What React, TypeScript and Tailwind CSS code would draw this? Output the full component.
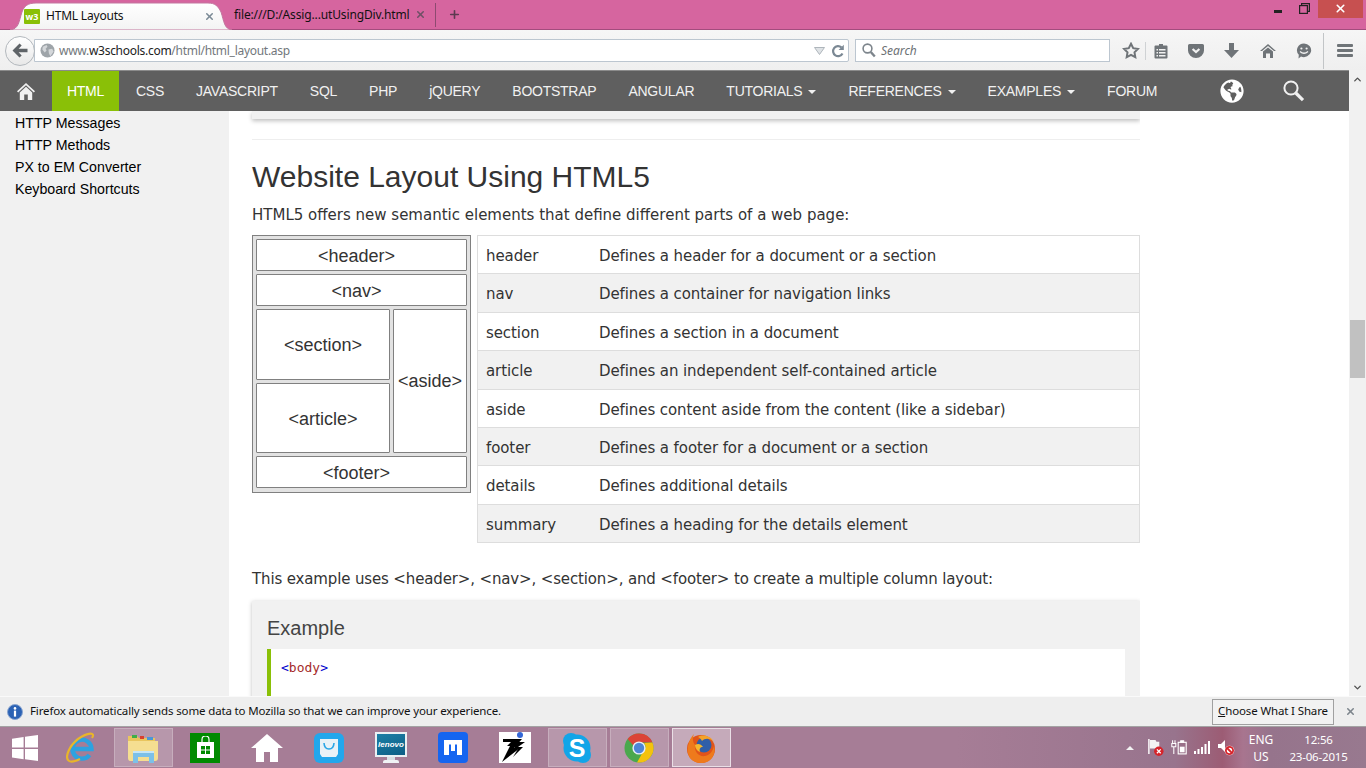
import { ChevronDown, ChevronUp, Plus, X } from 'lucide-react';
import { FaGlobeAmericas } from 'react-icons/fa';

const navLinks = [
  { label: 'CSS' },
  { label: 'JAVASCRIPT' },
  { label: 'SQL' },
  { label: 'PHP' },
  { label: 'jQUERY' },
  { label: 'BOOTSTRAP' },
  { label: 'ANGULAR' },
  { label: 'TUTORIALS', caret: true },
  { label: 'REFERENCES', caret: true },
  { label: 'EXAMPLES', caret: true },
  { label: 'FORUM' },
];

const sideLinks = ['HTTP Messages', 'HTTP Methods', 'PX to EM Converter', 'Keyboard Shortcuts'];

const tags = [
  ['header', 'Defines a header for a document or a section'],
  ['nav', 'Defines a container for navigation links'],
  ['section', 'Defines a section in a document'],
  ['article', 'Defines an independent self-contained article'],
  ['aside', 'Defines content aside from the content (like a sidebar)'],
  ['footer', 'Defines a footer for a document or a section'],
  ['details', 'Defines additional details'],
  ['summary', 'Defines a heading for the details element'],
];

function TabStrip() {
  return (
    <div className="flex h-[30px] items-end border-b border-[#a34c7d] bg-[#d6659f] pl-[10px] font-['Noto_Sans',sans-serif] text-[12px] text-[#111]">
      <div className="relative -mb-px flex h-[28px] w-[222px] items-center">
        <svg className="absolute inset-0" width="222" height="28" viewBox="0 0 222 28">
          <defs>
            <linearGradient id="tabFill" x1="0" y1="0" x2="0" y2="1">
              <stop offset="0" stopColor="#ffffff" />
              <stop offset="1" stopColor="#f3f3f3" />
            </linearGradient>
          </defs>
          <path d="M0 28C9 27 9 19 12 10C14 4 18 1 26 1H198C205 1 208 4 211 10C214 19 214 27 222 28Z" fill="url(#tabFill)" stroke="#c3769f" strokeWidth="1" />
        </svg>
        <div className="relative ml-[14px] flex h-[15px] w-[16px] items-center justify-center rounded-[1px] bg-[#8ac007] text-[9px] font-bold leading-none text-white">w3</div>
        <span className="relative ml-[6px] w-[158px] truncate text-[12px] tracking-[-0.2px]">HTML Layouts</span>
        <X className="relative text-[#7b8a96]" size={11} strokeWidth={3.4} />
      </div>
      <div className="flex h-[29px] w-[203px] items-center pl-[2px]">
        <span className="w-[181px] whitespace-nowrap text-[12px] tracking-[-0.14px]">file:///D:/Assig...utUsingDiv.html</span>
        <X className="text-[#6e5166]" size={11} strokeWidth={3.4} />
      </div>
      <div className="mb-[2px] h-[24px] w-px bg-[#8d4a70]" />
      <div className="flex h-[29px] w-[36px] items-center justify-center text-[#5c3a50]">
        <Plus size={13} strokeWidth={3} />
      </div>
      <div className="flex-1" />
      <div className="mb-[11px] flex h-[19px] items-center">
        <div className="mr-[17px] mt-[5px] h-[3px] w-[8px] bg-[#222]" />
        <svg className="mr-[8px]" width="11" height="11" viewBox="0 0 11 11" fill="none" stroke="#222" strokeWidth="1.2">
          <rect x="0.6" y="2.6" width="7.8" height="7.8" />
          <path d="M2.6 2.4V0.6H10.4V8.4H8.6" />
        </svg>
        <div className="mr-[3px] flex h-[19px] w-[45px] items-center justify-center bg-[#c75050] text-white">
          <X size={13} strokeWidth={3} />
        </div>
      </div>
    </div>
  );
}

function ToolIcon({ children, w = 36 }: { children: React.ReactNode; w?: number }) {
  return (
    <div className="flex items-center justify-center" style={{ width: w }}>
      {children}
    </div>
  );
}

function Toolbar() {
  return (
    <div className="flex h-[40px] items-center bg-gradient-to-b from-[#f6f6f6] to-[#efefef] pl-[5px] pt-px font-['Noto_Sans',sans-serif]">
      <div className="z-10 flex h-[30px] w-[30px] items-center justify-center rounded-full border border-[#b3b8bd] bg-gradient-to-b from-white to-[#e8e8e8]">
        <svg width="16" height="15" viewBox="0 0 16 15" fill="#5f6468">
          <path d="M7.5 0.5L9.7 2.6L6.6 5.7H15.5V9.3H6.6L9.7 12.4L7.5 14.5L0.5 7.5Z" />
        </svg>
      </div>
      <div className="-ml-[1px] flex h-[23px] w-[815px] items-center rounded-r-[2px] border border-[#bcc6d0] bg-white pl-[5px]">
        <svg width="15" height="15" viewBox="0 0 16 16">
          <circle cx="8" cy="8" r="7.5" fill="#9ea4a9" />
          <path d="M3 4L7 2L8 4L6 6L7 8L5 10L2.5 7ZM9 7L13 6L14.5 9L11 14L9.5 11Z" fill="#d4d7da" />
        </svg>
        <span className="ml-[4px] w-[755px] whitespace-nowrap text-[12px] tracking-[-0.28px] text-[#72777c]">
          www.<span className="text-[#222]">w3schools.com</span>/html/html_layout.asp
        </span>
        <svg width="11" height="8" viewBox="0 0 11 8">
          <path d="M0.5 0.5H10.5L5.5 7.5Z" fill="#dfe3e6" stroke="#aeb5bb" />
        </svg>
        <svg className="ml-[6px]" width="14" height="14" viewBox="0 0 14 14" fill="none" stroke="#7b8894" strokeWidth="2.2">
          <path d="M11.5 9.5A5 5 0 1 1 10.4 3.4" />
          <path d="M12.8 0.8V6H7.6Z" fill="#7b8894" stroke="none" />
        </svg>
      </div>
      <div className="ml-[6px] flex h-[23px] w-[255px] items-center border border-[#bcc6d0] bg-white pl-[6px]">
        <svg width="14" height="15" viewBox="0 0 14 15" fill="none" stroke="#7d858c">
          <circle cx="5.5" cy="5.5" r="4.4" strokeWidth="1.6" />
          <path d="M8.8 9L12.8 13.5" strokeWidth="2.4" />
        </svg>
        <span className="ml-[5px] text-[12px] italic text-[#6c7175]">Search</span>
      </div>
      <div className="ml-[10px] flex items-center">
        <ToolIcon w={22}>
          <svg width="18" height="17" viewBox="0 0 18 17" fill="none" stroke="#6f7478" strokeWidth="2">
            <path d="M9 1.8L11.2 6.2L16 6.9L12.5 10.3L13.3 15.1L9 12.8L4.7 15.1L5.5 10.3L2 6.9L6.8 6.2Z" />
          </svg>
        </ToolIcon>
        <div className="ml-[3px] h-[18px] w-px bg-[#cfd2d4]" />
        <ToolIcon w={30}>
          <svg width="14" height="16" viewBox="0 0 14 16">
            <path d="M1.5 2.5H5V1H9V2.5H12.5A1 1 0 0 1 13.5 3.5V14.5A1 1 0 0 1 12.5 15.5H1.5A1 1 0 0 1 .5 14.5V3.5A1 1 0 0 1 1.5 2.5Z" fill="#6f7478" />
            <path d="M2.5 6H4V7.5H2.5ZM5 6H11.5V7.5H5ZM2.5 9H4V10.5H2.5ZM5 9H11.5V10.5H5ZM2.5 12H4V13.5H2.5ZM5 12H11.5V13.5H5Z" fill="#f2f2f2" />
          </svg>
        </ToolIcon>
        <ToolIcon w={37}>
          <svg className="ml-[3px]" width="16" height="14" viewBox="0 0 16 14">
            <path d="M1.5 0H14.5A1.5 1.5 0 0 1 16 1.5V6.5A8 7.5 0 0 1 0 6.5V1.5A1.5 1.5 0 0 1 1.5 0Z" fill="#6f7478" />
            <path d="M4.6 5L8 8L11.4 5" fill="none" stroke="#f2f2f2" strokeWidth="2.2" />
          </svg>
        </ToolIcon>
        <ToolIcon w={37}>
          <svg width="15" height="15" viewBox="0 0 15 15" fill="#6f7478">
            <path d="M5 0H10V7H15L7.5 15L0 7H5Z" />
          </svg>
        </ToolIcon>
        <ToolIcon w={36}>
          <svg width="16" height="14" viewBox="0 0 16 14" fill="#6f7478">
            <path d="M8 0L16 7H14L8 2L2 7H0Z" />
            <path d="M8 3.5L13 7.5V14H10V9.5H6V14H3V7.5Z" />
          </svg>
        </ToolIcon>
        <ToolIcon w={36}>
          <svg width="16" height="16" viewBox="0 0 16 16">
            <path d="M8 0.5A7.2 6.8 0 1 1 5 13.5L2.5 15.5L2.8 11.8A7.2 6.8 0 0 1 8 0.5Z" fill="#6f7478" />
            <circle cx="5.4" cy="5.5" r="1.1" fill="#f2f2f2" />
            <circle cx="10.6" cy="5.5" r="1.1" fill="#f2f2f2" />
            <path d="M4 8.5Q8 12 12 8.5" fill="none" stroke="#f2f2f2" strokeWidth="1.3" />
          </svg>
        </ToolIcon>
        <div className="ml-px h-[36px] w-px bg-[#c2c5c7]" />
        <div className="ml-[13px] flex w-[16px] flex-col gap-[2px]">
          <div className="h-[3px] rounded-[1px] bg-[#6f7478]" />
          <div className="h-[3px] rounded-[1px] bg-[#6f7478]" />
          <div className="h-[3px] rounded-[1px] bg-[#6f7478]" />
        </div>
      </div>
    </div>
  );
}

function TopNav() {
  return (
    <div className="flex h-[41px] items-center border-t border-[#8b8b8b] bg-[#5f5f5f] font-['Liberation_Sans',sans-serif] text-[14px] tracking-[-0.25px] text-[#f1f1f1]">
      <div className="flex w-[52px] items-center justify-center">
        <svg width="18" height="17" viewBox="0 0 18 17" fill="#f1f1f1">
          <path d="M9 0L18 8.2L16.8 9.4L9 2.3L1.2 9.4L0 8.2Z" />
          <path d="M9 3.8L15.2 9.4V17H10.8V11.6H7.2V17H2.8V9.4Z" />
        </svg>
      </div>
      <div className="flex h-full w-[67px] items-center justify-center bg-[#8ac007] text-white">HTML</div>
      <div className="ml-px flex">
        {navLinks.map((link) => (
          <div key={link.label} className="flex items-center whitespace-nowrap px-[16px]">
            {link.label}
            {link.caret && <span className="ml-[6px] mt-[1px] h-0 w-0 border-x-[4px] border-t-[4px] border-x-transparent border-t-[#f1f1f1]" />}
          </div>
        ))}
      </div>
      <div className="ml-[47px] flex items-center">
        <FaGlobeAmericas size={24} className="text-white" />
        <svg className="ml-[39px]" width="22" height="22" viewBox="0 0 22 22" fill="none" stroke="#f1f1f1">
          <circle cx="8" cy="8" r="6.6" strokeWidth="2" />
          <path d="M12.8 13L20 20.2" strokeWidth="3.2" />
        </svg>
      </div>
    </div>
  );
}

function Sidebar() {
  return (
    <div className="w-[229px] shrink-0 bg-[#f1f1f1] pl-[15px] pt-px font-['Liberation_Sans',sans-serif] text-[14.2px] leading-[22px] text-black">
      {sideLinks.map((link) => (
        <div key={link}>{link}</div>
      ))}
    </div>
  );
}

function LayoutBox({ label, className }: { label: string; className: string }) {
  return (
    <div className={`flex items-center justify-center rounded-[1px] border border-[#808080] bg-white ${className}`}>
      {label}
    </div>
  );
}

function LayoutDiagram() {
  return (
    <div className="grid h-[258px] w-[219px] shrink-0 grid-cols-[134px_1fr] grid-rows-[32px_32px_71px_70px_32px] gap-[3px] border border-[#808080] bg-[#e2e2e2] p-[3px] font-['Liberation_Sans',sans-serif] text-[18px] text-[#333]">
      <LayoutBox label="<header>" className="col-span-2 pr-[10px] pt-[3px]" />
      <LayoutBox label="<nav>" className="col-span-2 pr-[10px] pt-[3px]" />
      <LayoutBox label="<section>" className="pt-px" />
      <LayoutBox label="<aside>" className="row-span-2 pt-px" />
      <LayoutBox label="<article>" className="pt-[3px]" />
      <LayoutBox label="<footer>" className="col-span-2 pr-[10px] pt-[3px]" />
    </div>
  );
}

function TagTable() {
  return (
    <div className="ml-[6px] flex w-[663px] flex-col border-x border-t border-[#dddddd] tracking-[-0.09px]">
      {tags.map(([name, desc], i) => (
        <div
          key={name}
          className={`grid h-[38.4px] grid-cols-[113px_1fr] items-center border-b border-[#dddddd] pl-[8px] pt-[3px] ${i % 2 === 1 ? 'bg-[#f1f1f1]' : 'bg-white'}`}
        >
          <span>{name}</span>
          <span>{desc}</span>
        </div>
      ))}
    </div>
  );
}

function PageBody() {
  return (
    <div className="flex min-h-0 flex-1 overflow-hidden bg-white">
      <Sidebar />
      <div className="w-[911px] shrink-0 pl-[23px] font-['DejaVu_Sans',sans-serif] text-[15px] text-[#333]">
        <div className="h-[8px] bg-[#f1f1f1] shadow-[0_2px_4px_rgba(0,0,0,0.25)]" />
        <div className="mt-[20px] h-px bg-[#eeeeee]" />
        <h2 className="mt-[18px] font-['Liberation_Sans',sans-serif] text-[30px] leading-[38px] text-[#333]">Website Layout Using HTML5</h2>
        <p className="mt-[9px] leading-[20px]">HTML5 offers new semantic elements that define different parts of a web page:</p>
        <div className="mt-[10px] flex items-start">
          <LayoutDiagram />
          <TagTable />
        </div>
        <p className="mt-[26px] leading-[20px] tracking-[-0.14px]">
          {'This example uses <header>, <nav>, <section>, and <footer> to create a multiple column layout:'}
        </p>
        <div className="mt-[12px] bg-[#f1f1f1] px-[15px] pt-[12px] pb-[16px] shadow-[0_1px_4px_rgba(0,0,0,0.25)]">
          <h3 className="font-['Liberation_Sans',sans-serif] text-[20px] leading-[30px] text-[#444]">Example</h3>
          <div className="mt-[6px] h-[120px] border-l-4 border-[#8ac007] bg-white pl-[10px] pt-[9px] font-['DejaVu_Sans_Mono',monospace] text-[13px] leading-[20px]">
            <span className="text-[#0000cd]">&lt;</span>
            <span className="text-[#a52a2a]">body</span>
            <span className="text-[#0000cd]">&gt;</span>
          </div>
        </div>
      </div>
      <div className="flex-1 bg-white" />
    </div>
  );
}

function Scrollbar() {
  return (
    <div className="flex w-[17px] shrink-0 flex-col items-center bg-[#f1f1f1] text-[#505050]">
      <ChevronUp className="mt-[4px] shrink-0" size={11} strokeWidth={3} />
      <div className="mt-[235px] h-[58px] w-[15px] shrink-0 bg-[#c1c1c1]" />
      <div className="flex-1" />
      <ChevronDown className="mb-[3px] shrink-0" size={11} strokeWidth={3} />
    </div>
  );
}

function NoticeBar() {
  return (
    <div className="flex h-[31px] items-center border-t border-b border-t-[#fafafa] border-b-[#a3a3a3] bg-[#eeeeee] pl-[7px] font-['Noto_Sans',sans-serif] text-[11.5px] tracking-[-0.14px] text-[#111]">
      <svg width="16" height="16" viewBox="0 0 16 16">
        <circle cx="8" cy="8" r="7.5" fill="#2b62b4" stroke="#8ba6d0" />
        <circle cx="8" cy="4.4" r="1.3" fill="#fff" />
        <rect x="6.9" y="6.6" width="2.2" height="6" fill="#fff" />
      </svg>
      <span className="ml-[7px] pb-[2px]">Firefox automatically sends some data to Mozilla so that we can improve your experience.</span>
      <div className="flex-1" />
      <div className="flex h-[26px] w-[122px] items-center justify-center border border-[#a0a0a0] bg-[#f2f2f2] pb-[2px]">
        <span className="underline">C</span>hoose What I Share
      </div>
      <div className="flex w-[32px] justify-center text-[#7d858c]">
        <X size={11} strokeWidth={3.4} />
      </div>
    </div>
  );
}

function TaskCell({ children, active, strong }: { children: React.ReactNode; active?: boolean; strong?: boolean }) {
  return (
    <div className="flex h-[41px] w-[62px] shrink-0 items-center justify-center">
      <div
        className={`flex h-[39px] w-[59px] items-center justify-center ${
          strong ? 'border border-[#eadfe6] bg-white/35' : active ? 'border border-[#c7aebd] bg-white/20' : ''
        }`}
      >
        {children}
      </div>
    </div>
  );
}

function Taskbar() {
  return (
    <div className="flex h-[41px] items-center overflow-hidden bg-[linear-gradient(90deg,#a67d96_0%,#a67d96_70%,#98748d_86%,#9c5c74_89.5%,#a8758f_91%,#96748c_93%,#98798f_100%)] font-['Noto_Sans',sans-serif] text-white">
      <div className="flex w-[50px] shrink-0 justify-center">
        <svg width="26" height="26" viewBox="0 0 28 26" fill="#fff" preserveAspectRatio="none">
          <path d="M0 3.8L12.5 2V12.5H0ZM14 1.8L28 0V12.5H14ZM0 14H12.5V24.2L0 22.4ZM14 14H28V26L14 24.2Z" />
        </svg>
      </div>
      <TaskCell>
        <svg width="30" height="32" viewBox="0 0 30 32" fill="none">
          <path d="M6.5 17H25.5A9.5 9.5 0 1 0 23.5 23" stroke="#2da2e0" strokeWidth="4.4" />
          <path d="M26 6C30 0 22 0 12 7C4 13 -1 24 2 28C4 31 10 29 14 27" stroke="#e9b52a" strokeWidth="2.2" />
        </svg>
      </TaskCell>
      <TaskCell active>
        <svg width="32" height="32" viewBox="0 0 32 32">
          <path d="M1 4H10L12 6H28V10H1Z" fill="#e9c55e" />
          <rect x="5" y="3" width="5" height="3" fill="#3fae49" />
          <rect x="13" y="4" width="4" height="3" fill="#d9402f" />
          <rect x="20" y="5" width="6" height="3" fill="#4a97d6" />
          <path d="M1 9H31V26C31 28 30 29 28 29H3C2 29 1 28 1 26Z" fill="#f5de91" />
          <path d="M6 19H27V31H22V25H11V31H6Z" fill="#7cc0e8" />
          <path d="M6 19H27V21H6Z" fill="#c6e6f7" />
        </svg>
      </TaskCell>
      <TaskCell>
        <div className="flex h-[30px] w-[30px] items-center justify-center bg-[#008a00]">
          <svg width="19" height="23" viewBox="0 0 19 23" fill="none">
            <path d="M6 6V3.5A3.5 3.5 0 0 1 13 3.5V6" stroke="#fff" strokeWidth="1.2" />
            <path d="M1 6H18V22H1Z" fill="#fff" />
            <path d="M5 10H9V13.5H5ZM10 10H14V13.5H10ZM5 14.5H9V18H5ZM10 14.5H14V18H10Z" fill="#008a00" />
          </svg>
        </div>
      </TaskCell>
      <TaskCell>
        <svg width="32" height="28" viewBox="0 0 32 28" fill="#fff">
          <path d="M16 0L32 14H27V28H19V18H13V28H5V14H0Z" />
        </svg>
      </TaskCell>
      <TaskCell>
        <div className="flex h-[30px] w-[30px] items-center justify-center rounded-[6px] bg-[#22a7ec]">
          <svg width="20" height="20" viewBox="0 0 20 20" fill="none">
            <path d="M1 1H19V16L17 19H3L1 16Z" fill="#e9f2f7" />
            <path d="M5 5C5.5 13 14.5 13 15 5" stroke="#2aa6e6" strokeWidth="1.6" />
          </svg>
        </div>
      </TaskCell>
      <TaskCell>
        <div className="flex flex-col items-center">
          <div className="flex h-[25px] w-[32px] items-center justify-center border-2 border-[#e9f0f3] bg-[linear-gradient(160deg,#1b7fa6,#0d5e85)] font-['Liberation_Sans',sans-serif] text-[8px] font-bold italic leading-none text-white">
            lenovo
          </div>
          <div className="h-[3px] w-[8px] bg-[#d8dfe3]" />
          <div className="h-[3px] w-[16px] rounded-t-[2px] bg-[#f0f3f5]" />
        </div>
      </TaskCell>
      <TaskCell>
        <div className="flex h-[31px] w-[30px] items-center justify-center rounded-[4px] bg-[#1565f0]">
          <svg width="18" height="15" viewBox="0 0 18 15" fill="#fff">
            <path d="M0 0H18V15H13V4.5H11V11H7V4.5H5V15H0Z" />
          </svg>
        </div>
      </TaskCell>
      <TaskCell>
        <div className="relative h-[31px] w-[32px] bg-white">
          <svg width="32" height="31" viewBox="0 0 32 31" fill="#000">
            <path d="M4 7H23L15 16H21L3 30L11 14H8L12 10H4Z" />
            <path d="M17 10H26L19 15L24 15L14 25L19 17H15Z" />
            <circle cx="21" cy="3" r="3" fill="#3367d6" />
          </svg>
        </div>
      </TaskCell>
      <TaskCell active>
        <svg width="30" height="32" viewBox="0 0 30 32">
          <circle cx="9" cy="9" r="8" fill="#12a5e8" />
          <circle cx="21" cy="23" r="8" fill="#12a5e8" />
          <circle cx="15" cy="16" r="13.5" fill="#12a5e8" />
          <text x="15" y="25" textAnchor="middle" fontFamily="Liberation Sans" fontSize="25" fontWeight="700" fill="#fff">S</text>
        </svg>
      </TaskCell>
      <TaskCell active>
        <svg width="30" height="30" viewBox="0 0 30 30">
          <circle cx="15" cy="15" r="14.5" fill="#4aa84d" />
          <path d="M15 .5A14.5 14.5 0 0 1 28.4 9.5H15A5.5 5.5 0 0 0 9.8 13L3.6 6A14.5 14.5 0 0 1 15 .5Z" fill="#dc4437" />
          <path d="M28.4 9.5A14.5 14.5 0 0 1 13 29.4L19.5 18A5.5 5.5 0 0 0 20 10Z" fill="#f4c20d" />
          <circle cx="15" cy="15" r="6.6" fill="#e8eef7" />
          <circle cx="15" cy="15" r="5.2" fill="#4e85d6" />
        </svg>
      </TaskCell>
      <TaskCell strong>
        <svg width="30" height="32" viewBox="0 0 30 32">
          <circle cx="15" cy="17" r="14" fill="#e0541a" />
          <circle cx="18" cy="13" r="7.5" fill="#2f5fa8" />
          <path d="M8 2C6 7 7 10 9 13C8 20 13 25 19 24C24 23 27 19 28 14C30 20 27 31 15 31C5 31 0 23 2 14C3 9 5 5 8 2Z" fill="#ee7a1c" />
          <path d="M12 5C17 2 25 4 28 10C24 6 19 6 16 9C15 7 14 6 12 5Z" fill="#f3a32a" />
          <path d="M9 13C12 11 15 12 17 15C14 15 13 17 14 20C11 19 9 16 9 13Z" fill="#f6b62d" />
        </svg>
      </TaskCell>
      <div className="flex-1" />
      <div className="h-0 w-0 border-x-[4px] border-b-[4px] border-x-transparent border-b-[#f3f3f3]" />
      <svg className="ml-[13px]" width="17" height="19" viewBox="0 0 18 20">
        <path d="M2 1V17" stroke="#fff" strokeWidth="1.5" />
        <path d="M3 2H9L10 4H13V11H3Z" fill="#f3f3f3" />
        <circle cx="12.5" cy="14" r="5" fill="#d6232a" />
        <path d="M10.5 12L14.5 16M14.5 12L10.5 16" stroke="#fff" strokeWidth="1.4" />
      </svg>
      <svg className="ml-[7px]" width="16" height="15" viewBox="0 0 20 18" fill="none" stroke="#fff">
        <path d="M2 0V4M5 0V4M1 4H6V8H1ZM3.5 8V17" strokeWidth="1.3" />
        <rect x="9" y="2.5" width="10" height="14.5" strokeWidth="1.4" />
        <rect x="12" y="0.5" width="4" height="2" fill="#fff" />
        <rect x="11" y="8" width="6" height="7" fill="#fff" stroke="none" />
      </svg>
      <svg className="ml-[7px]" width="17" height="13" viewBox="0 0 17 13" fill="#fff">
        <path d="M0 10H2V13H0ZM3.5 8H5.5V13H3.5ZM7 6H9V13H7ZM10.5 3H12.5V13H10.5ZM14 0H16V13H14Z" />
      </svg>
      <svg className="ml-[7px]" width="17" height="17" viewBox="0 0 17 17">
        <path d="M0 5H3L7 1V13L3 9H0Z" fill="#fff" />
        <circle cx="11.5" cy="11.5" r="4.8" fill="#fff" />
        <circle cx="11.5" cy="11.5" r="3.6" fill="none" stroke="#d6232a" strokeWidth="1.8" />
        <path d="M9 9L14 14" stroke="#d6232a" strokeWidth="1.8" />
      </svg>
      <div className="ml-[6px] flex w-[40px] flex-col items-center text-[12px] leading-[17px]">
        <span>ENG</span>
        <span>US</span>
      </div>
      <div className="ml-[6px] mr-[16px] flex w-[63px] flex-col items-center whitespace-nowrap text-[11.5px] leading-[17px] tracking-[-0.2px]">
        <span>12:56</span>
        <span>23-06-2015</span>
      </div>
    </div>
  );
}

export default function App() {
  return (
    <div className="flex h-[768px] w-[1366px] flex-col overflow-hidden">
      <TabStrip />
      <Toolbar />
      <div className="flex h-[626px]">
        <div className="flex w-[1349px] flex-col">
          <TopNav />
          <PageBody />
        </div>
        <Scrollbar />
      </div>
      <NoticeBar />
      <Taskbar />
    </div>
  );
}
